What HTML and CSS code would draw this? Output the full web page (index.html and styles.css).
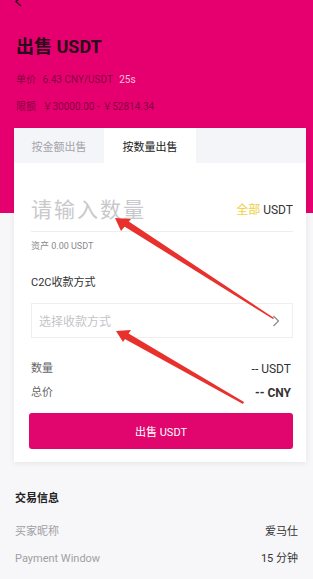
FILE: index.html
```html
<!DOCTYPE html>
<html lang="zh">
<head>
<meta charset="utf-8">
<link rel="stylesheet" href="styles.css">
</head>
<body>
<div class="page">
  <header class="hero">
    <div class="back"><svg width="10" height="10" viewBox="0 0 10 10"><path d="M7 -3 L2 1.5 L7 6" fill="none" stroke="#3a1024" stroke-width="1.6"/></svg></div>
    <h1 class="title">出售 USDT</h1>
    <div class="meta"><span class="lbl">单价</span> 6.43 CNY/USDT <span class="timer">25s</span></div>
    <div class="meta"><span class="lbl">限额</span> ￥30000.00 - ￥52814.34</div>
  </header>

  <section class="card">
    <div class="tabs">
      <div class="tab">按金额出售</div>
      <div class="tab active">按数量出售</div>
      <div class="tab-fill"></div>
    </div>
    <div class="body">
      <div class="amount">
        <span class="placeholder">请输入数量</span>
        <span class="all"><span class="gold">全部</span> USDT</span>
      </div>
      <div class="asset">资产 0.00 USDT</div>
      <div class="label">C2C收款方式</div>
      <div class="select">
        <span>选择收款方式</span>
        <svg width="8" height="12" viewBox="0 0 8 12"><path d="M1.5 1 L6.5 6 L1.5 11" fill="none" stroke="#8a8a8a" stroke-width="1.2"/></svg>
      </div>
      <div class="sum-row"><span>数量</span><span class="val">-- USDT</span></div>
      <div class="sum-row"><span>总价</span><span class="val bold">-- CNY</span></div>
      <button class="sell">出售 USDT</button>
    </div>
  </section>

  <section class="info">
    <div class="info-title">交易信息</div>
    <div class="info-row"><span>买家昵称</span><span class="v">爱马仕</span></div>
    <div class="info-row"><span>Payment Window</span><span class="v">15 分钟</span></div>
  </section>

  <svg class="arrows" width="313" height="579" viewBox="0 0 313 579">
    <g fill="#e8302c">
      <polygon points="273,319 274,318 125,219 122,225"/>
      <polygon points="115,218 131,219 121,231"/>
      <polygon points="243,404 244,402 126,332 123,338"/>
      <polygon points="116,331 131,330 123,342"/>
    </g>
  </svg>
</div>
</body>
</html>
```

FILE: styles.css
```css
* { box-sizing: border-box; }
html, body { margin: 0; padding: 0; }
body {
  width: 313px;
  height: 579px;
  overflow: hidden;
  background: #f7f7f9;
  font-family: Roboto, "Noto Sans CJK SC", sans-serif;
  color: #333;
}
.page { position: relative; width: 313px; height: 579px; }

.hero {
  background: #e6006f;
  height: 213px;
  padding: 0 16px;
}
.back { height: 34px; }
.back svg { display: block; margin-left: -2px; }
.title {
  margin: 0;
  font-size: 18px;
  font-weight: 700;
  line-height: 26px;
  color: #2a0b1a;
}
.meta {
  font-size: 10px;
  line-height: 14px;
  color: rgba(40, 0, 20, 0.55);
  margin-top: 13px;
}
.meta .lbl { margin-right: 4px; }
.timer { color: rgba(255, 230, 240, 0.85); margin-left: 4px; }

.card {
  margin: -85px 7px 0 14px;
  background: #fff;
  box-shadow: 0 1px 6px rgba(0, 0, 0, 0.08);
  height: 334px;
}
.tabs { display: flex; height: 35px; }
.tab {
  width: 90px;
  display: flex;
  align-items: center;
  justify-content: center;
  font-size: 11px;
  color: #a5a5ab;
  background: #f4f5f8;
}
.tab.active { background: #fff; color: #222; width: 92px; }
.tab-fill { flex: 1; background: #f4f5f8; }

.body { padding: 0 13px 0 17px; }
.amount {
  display: flex;
  justify-content: space-between;
  align-items: center;
  height: 69px;
  padding-top: 22px;
  border-bottom: 1px solid #eeeeee;
}
.placeholder { font-size: 21px; color: #c9c9cc; letter-spacing: 2px; }
.all { font-size: 12px; color: #333; }
.gold { color: #f0cf3a; }
.asset { font-size: 9px; color: #8a8a8a; margin-top: 8px; line-height: 12px; }
.label { font-size: 11px; color: #333; margin-top: 23px; line-height: 16px; }
.select {
  margin-top: 12px;
  height: 35px;
  border: 1px solid #efefef;
  display: flex;
  align-items: center;
  justify-content: space-between;
  padding: 0 12px 0 7px;
  font-size: 12px;
  color: #c4c4c8;
}
.sum-row {
  display: flex;
  justify-content: space-between;
  font-size: 11px;
  line-height: 16px;
  color: #666;
  padding-right: 2px;
}
.select + .sum-row { margin-top: 23px; }
.sum-row + .sum-row { margin-top: 8px; }
.sum-row .val { color: #333; font-size: 12px; }
.sum-row .bold { font-weight: 700; }
.sell {
  display: block;
  width: 264px;
  margin: 12px 0 0 -2px;
  height: 36px;
  border: none;
  border-radius: 3px;
  background: #e0066e;
  color: #fff;
  font-family: Roboto, "Noto Sans CJK SC", sans-serif;
  font-size: 11px;
}

.info { padding: 29px 15px 0 15px; }
.info-title { font-size: 11px; font-weight: 700; color: #222; line-height: 16px; }
.info-row {
  display: flex;
  justify-content: space-between;
  font-size: 11px;
  line-height: 16px;
  color: #a0a0a4;
  margin-top: 17px;
}
.info-row + .info-row { margin-top: 11px; }
.info-row .v { color: #333; }

.arrows { position: absolute; left: 0; top: 0; pointer-events: none; }
```
